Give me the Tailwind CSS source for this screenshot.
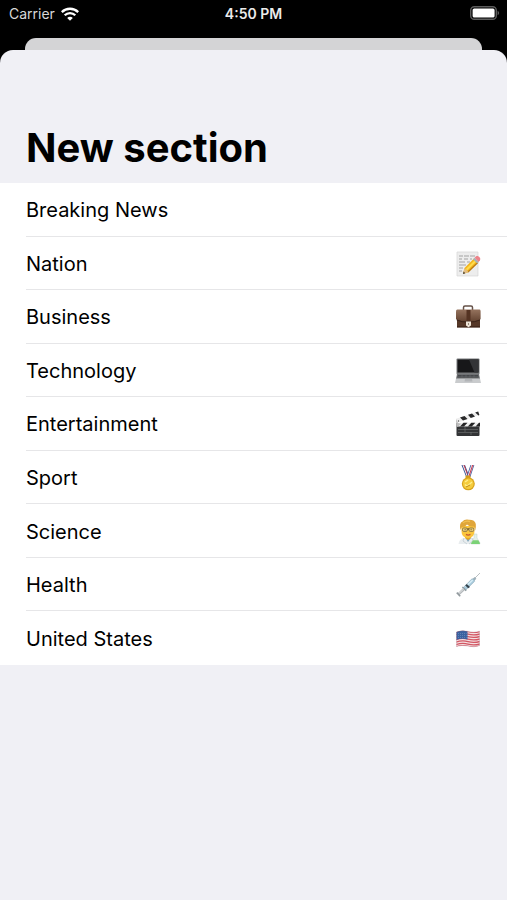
<!DOCTYPE html>
<html lang="en">
<head>
<meta charset="utf-8">
<meta name="viewport" content="width=device-width, initial-scale=1">
<title>New section</title>
<script src="https://cdn.jsdelivr.net/npm/@tailwindcss/browser@4"></script>
</head>
<body class="flex min-h-screen flex-col bg-black font-['Inter','Liberation_Sans',sans-serif] text-black">
<header class="grid h-[38px] grid-cols-3 items-start px-[9px] pt-1 text-[14px] leading-5 text-[#d8d8d8]">
  <div class="flex items-center gap-[6px]">
    <span>Carrier</span>
    <svg class="h-[14px] w-[18px]" viewBox="0 0 18 14" fill="none" stroke="#fff" stroke-width="2.3" role="img" aria-label="Wi-Fi"><path d="M.8 5.1C5.3.6 12.7.6 17.2 5.1"/><path d="M3.7 8.2c2.9-2.9 7.7-2.9 10.6 0"/><path d="M9 13.8 6.2 10.9c1.5-1.5 4.1-1.5 5.6 0z" fill="#fff" stroke="none"/></svg>
  </div>
  <time class="text-center font-semibold text-[#ebebeb]">4:50 PM</time>
  <svg class="mt-[2px] -mr-[2px] h-[14px] w-[30px] justify-self-end" viewBox="0 0 30 14" role="img" aria-label="Battery full"><rect x=".7" y=".7" width="25.6" height="12.6" rx="3.6" fill="none" stroke="#5c5c5c" stroke-width="1.4"/><rect x="2.6" y="2.4" width="22" height="9.2" rx="1.6" fill="#fff"/><path d="M27.6 4.8c2 .9 2 3.5 0 4.4z" fill="#5c5c5c"/></svg>
</header>
<div class="mx-[25px] h-3 rounded-t-[11px] bg-[#d4d4d6]"></div>
<main class="flex-1 rounded-t-[13px] bg-[#f0f0f5] pt-[73px]">
  <h1 class="px-[26px] pb-[10px] text-[40px] leading-[50px] font-bold">New section</h1>
  <ul class="grid min-h-[482px] auto-rows-fr bg-white text-[20px] leading-[26px]">
    <li class="flex pl-[26px]"><button type="button" class="flex flex-1 items-center justify-between border-b border-[#e6e6e8] pt-[2px] pr-[25px] text-left">Breaking News</button></li>
    <li class="flex pl-[26px]"><button type="button" class="flex flex-1 items-center justify-between border-b border-[#e6e6e8] pt-[2px] pr-[25px] text-left">Nation
      <svg class="size-[28px]" viewBox="0 0 28 28" aria-hidden="true"><path d="M3 2h21v24H3z" fill="#ededed" stroke="#d6d6d6" stroke-width=".7"/><path d="M5 6h4m1 0h5m1 0h5M5 9h3m2 0h4m2 0h2M5 12h6m2 0h3M5 15h7M5 18h4M5 21h3" stroke="#a3a3a3"/><path d="m9 24 1.5-6L20 8.4l4.2 4.1L14.5 22z" fill="#f3b51d"/><path d="m11.8 19 9.7-9.5 1.4 1.4-9.7 9.6z" fill="#ffdb4b"/><path d="m13 21.9 10-9.5 1.2.7-9.8 9.5z" fill="#b97813"/><path d="m19 9.3 1.6-1.6 4.2 4.2-1.6 1.5z" fill="#a7b2b8"/><path d="m20.6 7.7 1.3-1.3c2-1.4 5.5 1.5 4 4l-1.3 1.5z" fill="#ee8289"/><path d="m9 24 1.5-6 4 4z" fill="#e3bd82"/><path d="m9 24 .6-2.4 1.7 1.7z" fill="#383431"/></svg></button></li>
    <li class="flex pl-[26px]"><button type="button" class="flex flex-1 items-center justify-between border-b border-[#e6e6e8] pt-[2px] pr-[25px] text-left">Business
      <svg class="size-[28px]" viewBox="0 0 28 28" aria-hidden="true"><defs><linearGradient id="leather" x2="0" y2="1"><stop stop-color="#95735e"/><stop offset="1" stop-color="#634331"/></linearGradient></defs><path d="M9.5 7V4.5q0-1.5 1.5-1.5h6q1.5 0 1.5 1.5V7" fill="none" stroke="#655148" stroke-width="1.5"/><path d="M3 14h23v10.5H3z" fill="#553727"/><path d="M3.3 6.5h22.4q.9 0 .9 2v7.8q-5 2.2-12.3 2.2T2 16.3V8.5q0-2 1.3-2z" fill="url(#leather)"/><path d="M12.5 7h4v11h-4z" fill="#543322"/><path d="M2.7 17q5 2.2 11.6 2.2T26 17M3 23.8h23" fill="none" stroke="#3b2419"/><path d="M12 18.5h5v4l-2.5 1.7-2.5-1.7z" fill="#eee4d7"/><path d="M14 20h1v2h-1z" fill="#958778"/></svg></button></li>
    <li class="flex pl-[26px]"><button type="button" class="flex flex-1 items-center justify-between border-b border-[#e6e6e8] pt-[2px] pr-[25px] text-left">Technology
      <svg class="size-[28px]" viewBox="0 0 28 28" aria-hidden="true"><rect x="2.5" y="1.5" width="23" height="16" rx="1" fill="#77797b"/><path d="M3.5 2.5h21v13h-21z" fill="#171719"/><path d="M15 2.5h9.5v13h-4z" fill="#333437"/><path d="M3 17h22l1 5H2z" fill="#6e7073"/><path d="M4 18h20l.6 2.6H3.4z" fill="#424447"/><path d="M4 19.3h20M8 18v2.5m4-2.5v2.5m4-2.5v2.5m4-2.5v2.5" stroke="#707276" stroke-width=".5"/><path d="M2 21.5h24l1 4.5H1z" fill="#c9cbcd"/><path d="M11 22h7l.5 2.5h-8z" fill="#b2b4b7"/></svg></button></li>
    <li class="flex pl-[26px]"><button type="button" class="flex flex-1 items-center justify-between border-b border-[#e6e6e8] pt-[2px] pr-[25px] text-left">Entertainment
      <svg class="size-[28px]" viewBox="0 0 28 28" aria-hidden="true"><path d="M2.5 13h23v12q0 1-1 1h-21q-1 0-1-1z" fill="#333436"/><path d="M2 8.7 24.2 1.5l1.2 3.6L4 12.5z" fill="#eee"/><path d="m6 7.4 4.5-1.5 3 3L9 10.5zm8-2.6L18 3.4l3 3-4.2 1.5zm7.2-2.4 3-.9 1.2 3.6-1 .4z" fill="#29292a"/><path d="M3 12.8h23v3.7H3z" fill="#eee"/><path d="m6 16.5 3.5-3.7h4L10 16.5zm7.8 0 3.5-3.7h4l-3.5 3.7zm7.8 0 3.4-3.7h1v3.7z" fill="#252526"/><path d="M2 8.7 4 13l3 .8-3 3-1.5-.3z" fill="#bbb"/><circle cx="4.5" cy="11" r=".7" fill="#555"/><path d="M4 19.5h20M4 22.5h20M11 17v5m6 0v3" stroke="#747577" stroke-width=".6"/></svg></button></li>
    <li class="flex pl-[26px]"><button type="button" class="flex flex-1 items-center justify-between border-b border-[#e6e6e8] pt-[2px] pr-[25px] text-left">Sport
      <svg class="size-[28px]" viewBox="0 0 28 28" aria-hidden="true"><path d="m7.5 1 4.7 12h3.3L11 1z" fill="#344f91"/><path d="m8.5 1 4.6 12h1.3L10 1z" fill="#fff"/><path d="m9.4 1 4.6 12h1L10.4 1z" fill="#c43a4b"/><path d="m16.5 1-4 12h3.8l4-12z" fill="#34539a"/><path d="m17.3 1-4 12h2.2l4-12z" fill="#fff"/><path d="m18.1 1-4 12h1.2l4-12z" fill="#ce4051"/><rect x="11.5" y="11.5" width="5" height="3" rx="1" fill="#d49d18"/><circle cx="14.3" cy="19.8" r="6.5" fill="#d7a31c"/><circle cx="14.3" cy="19.8" r="5.3" fill="#f5cc3e"/><path d="M11 20.5q1.5 2 3.5.5t3.5-3M11 18l3-2" fill="none" stroke="#ffef8c" stroke-width="1.3"/><path d="m12 23 4-2" stroke="#c18d16"/></svg></button></li>
    <li class="flex pl-[26px]"><button type="button" class="flex flex-1 items-center justify-between border-b border-[#e6e6e8] pt-[2px] pr-[25px] text-left">Science
      <svg class="size-[28px]" viewBox="0 0 28 28" aria-hidden="true"><path d="M4.5 26q.5-5 5.5-6h8q5 1 5.5 6z" fill="#e9edef"/><path d="m11 19 3 5 3.5-5z" fill="#82a9bd"/><path d="m10 20-1 3 4 3m5-6 1 3-4 3" fill="none" stroke="#c1cdd2" stroke-width=".8"/><path d="M11 17h6v3l-3 2-3-2z" fill="#e6a520"/><path d="M7.5 8h13v5q0 7-6.5 7t-6.5-7z" fill="#fbc63d"/><path d="M6.5 12Q4.8 5 8.5 3.5 10 1 15 1.7q6-.1 6.8 4.3.4 3-.6 6.5L20 8.5q-5 .5-7-2-1.5 2.5-5 2.5z" fill="#e0a63a"/><path d="M9 4.8q3-2.3 7-1.3" fill="none" stroke="#f1c052" stroke-width="1.3"/><rect x="8.5" y="10" width="4.8" height="3.4" rx="1.2" fill="#edcf75" stroke="#6d5c3c" stroke-width=".7"/><rect x="15" y="10" width="4.8" height="3.4" rx="1.2" fill="#edcf75" stroke="#6d5c3c" stroke-width=".7"/><path d="M13.3 11H15m-4.3.7h.8m5.2 0h.8" stroke="#443722"/><path d="M12 16.4q2.2 1.4 4.4 0" fill="none" stroke="#c55831" stroke-width="1.3"/><path d="M20 16h3v4l3 5q.4 1-.7 1h-7.6q-1 0-.6-1L20 20z" fill="#e5f0e8" stroke="#c3d2ca" stroke-width=".5"/><path d="m19 22.2 5.3.1 1.7 2.9q.2.8-.8.8h-7.6q-.8 0-.5-.8z" fill="#7bd276"/></svg></button></li>
    <li class="flex pl-[26px]"><button type="button" class="flex flex-1 items-center justify-between border-b border-[#e6e6e8] pt-[2px] pr-[25px] text-left">Health
      <svg class="size-[28px]" viewBox="0 0 28 28" aria-hidden="true"><path d="m20 8 6-6" stroke="#a9b0b4" stroke-width=".8"/><path d="m18.7 7.8 2-1.8 1.7 1.7-2 2z" fill="#9eafb9"/><path d="m9.4 16.4 8.6-8.6q2-.1 2.7 2.4l-8.9 8.8z" fill="#a8cbdd" stroke="#8da8b6" stroke-width=".6"/><path d="m11.2 15 7-6.6 1 1-7.1 6.9z" fill="#d7edf6"/><path d="m12.8 13 3.2 3-1.8 1.3-3-2.8z" fill="#35434d"/><path d="m8.4 16 3.8 3.8" stroke="#8c989e" stroke-width="1.4"/><path d="m9.8 18.2-5.4 5.2" stroke="#b3b8bb" stroke-width="2.6"/><path d="m9.6 18-5.3 5" stroke="#e5e7e8"/><path d="m2.8 21.6 3.4 3.6" stroke="#91999d" stroke-width="1.6"/></svg></button></li>
    <li class="flex pl-[26px]"><button type="button" class="flex flex-1 items-center justify-between pt-[2px] pr-[25px] text-left">United States
      <svg class="size-[28px]" viewBox="0 0 28 28" aria-hidden="true"><defs><clipPath id="cloth"><path d="M2.5 7Q8 4.7 14 6.4t11.5-.2v14.5q-5.5 2-11.5.4t-11.5.4z"/></clipPath></defs><g clip-path="url(#cloth)"><path d="M2 4h24v19H2z" fill="#f3dfe1"/><path d="M2 7.2q6-2.3 12-.6t12-.2M2 9.7q6-2.3 12-.6t12-.2M2 12.2q6-2.3 12-.6t12-.2M2 14.7q6-2.3 12-.6t12-.2M2 17.2q6-2.3 12-.6t12-.2M2 19.7q6-2.3 12-.6t12-.2M2 22q6-2.3 12-.6t12-.2" fill="none" stroke="#d35764" stroke-width="1.4"/><path d="M2 4h11.5v10.5Q8 13 2 15z" fill="#3b61a0"/><path d="M4 8.5h8.5M4 10.5h8.5M4 12.5h8.5" stroke="#7f9ac6" stroke-width=".7" stroke-dasharray=".8 1.2"/></g><path d="M2.5 7Q8 4.7 14 6.4t11.5-.2v14.5q-5.5 2-11.5.4t-11.5.4z" fill="none" stroke="#91606f" stroke-opacity=".45" stroke-width=".5"/></svg></button></li>
  </ul>
</main>
</body>
</html>
